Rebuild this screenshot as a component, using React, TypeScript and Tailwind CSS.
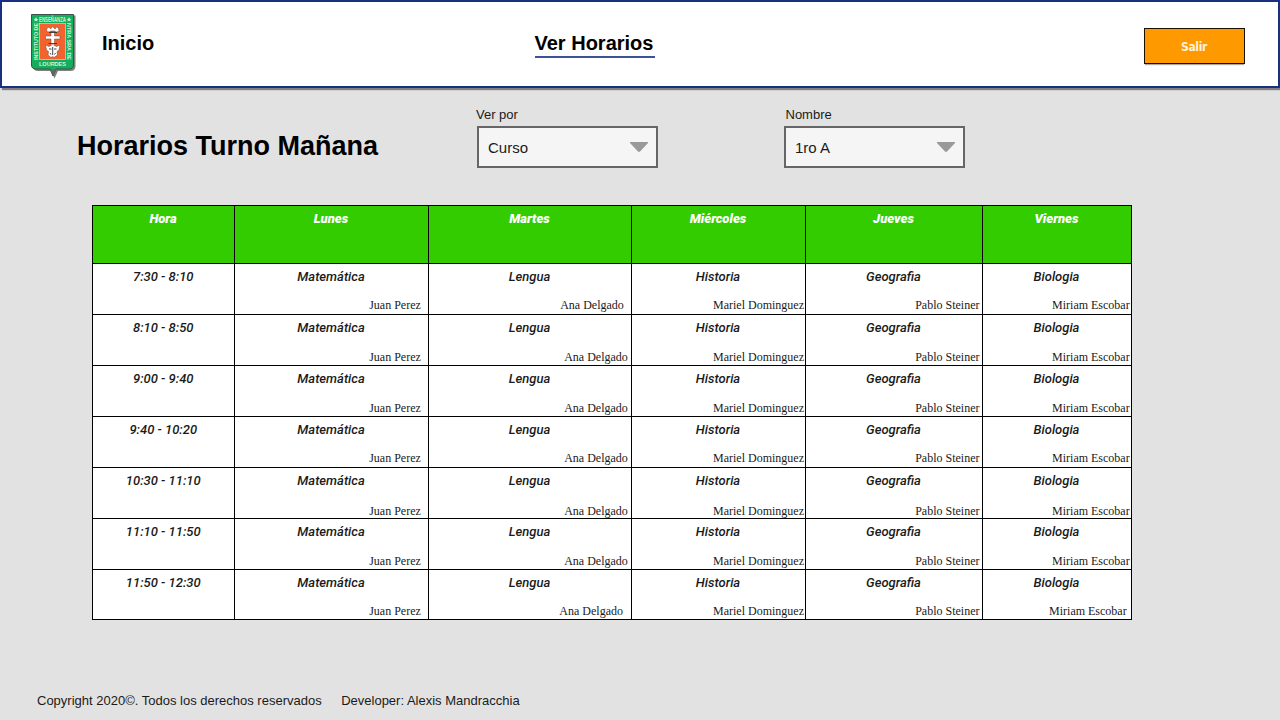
import React from "react";

const days = ["Hora", "Lunes", "Martes", "Miércoles", "Jueves", "Viernes"];

const subjects = [
  { name: "Matemática", teacher: "Juan Perez", pad: "pr-[7.2px]" },
  { name: "Lengua", teacher: "Ana Delgado", pad: "pr-[3.2px]" },
  { name: "Historia", teacher: "Mariel Dominguez", pad: "pr-px" },
  { name: "Geografia", teacher: "Pablo Steiner", pad: "pr-[2.5px]" },
  { name: "Biologia", teacher: "Miriam Escobar", pad: "pr-[1.3px]" },
];

type Row = { time: string; top: string; pads?: Record<string, string> };

const rows: Row[] = [
  { time: "7:30 - 8:10", top: "mt-[12px]", pads: { Lengua: "pr-[7.2px]" } },
  { time: "8:10 - 8:50", top: "mt-[13px]" },
  { time: "9:00 - 9:40", top: "mt-[13px]" },
  { time: "9:40 - 10:20", top: "mt-[12px]" },
  { time: "10:30 - 11:10", top: "mt-[14px]" },
  { time: "11:10 - 11:50", top: "mt-[13px]" },
  { time: "11:50 - 12:30", top: "mt-[12px]", pads: { Lengua: "pr-[8px]", Biologia: "pr-[4.3px]" } },
];

function Shield() {
  return (
    <svg width="50" height="68" viewBox="28 12 50 68" className="block">
      <path d="M33.5 15.5H75.5V66Q75.5 71 70.5 71H58L54.5 78.5L51 71H38Q33.5 71 33.5 67Z" fill="#555" opacity="0.75" />
      <path d="M31.5 14.5H73.5V65Q73.5 69 69 69H56L53 76L50 69H36Q31.5 69 31.5 65Z" fill="#13ad5d" stroke="#3f5148" strokeWidth="1" />
      <path d="M50 69.5H56L53 76Z" fill="#666" />
      <rect x="39.5" y="23.5" width="26" height="36" fill="#f2632f" stroke="#d8efc9" strokeWidth="0.6" />
      <g fill="#d0f3d9" fontFamily="Liberation Sans, sans-serif" fontWeight="700" fontSize="6.4">
        <text x="39" y="21.8" textLength="27" lengthAdjust="spacingAndGlyphs">ENSEÑANZA</text>
        <text x="39" y="66" textLength="27" lengthAdjust="spacing" fontSize="5.6">LOURDES</text>
        <text transform="translate(38.4 60) rotate(-90)" textLength="37" lengthAdjust="spacingAndGlyphs" fontSize="6">INSTITUTO DE</text>
        <text transform="translate(67 23) rotate(90)" textLength="37" lengthAdjust="spacingAndGlyphs" fontSize="6">NTRA SRA DE</text>
      </g>
      <g fill="#c4efd0">
        <path d="M36 17L36.8 18.8L38.4 19L37.2 20L37.6 21.6L36 20.7L34.4 21.6L34.8 20L33.6 19L35.2 18.8Z" />
        <path d="M69 17L69.8 18.8L71.4 19L70.2 20L70.6 21.6L69 20.7L67.4 21.6L67.8 20L66.6 19L68.2 18.8Z" />
      </g>
      <g fill="#fff" stroke="#7b3a2b" strokeWidth="0.5">
        <path d="M47 28L49 27L50.5 29L52.7 26.5L55 29L56.5 27L58.5 28L59 31.5L56 32L55 31L50.5 31L49.5 32L46.5 31.5Z" />
        <path d="M51 32H54.5V36H60V39H54.5V47H51V39H45.5V36H51Z" />
        <path d="M45.5 45L49 46.5L52.7 44.5L56.5 46.5L60 45L59 50L57 51.5L57.5 55L54 57.5L52.7 56.5L51 57.5L48 55L48.5 51.5L46.5 50Z" />
      </g>
      <path d="M49 32.5H57M48.5 43.5H57M49 49H51.5M54 49H56.5M52.7 47V55M50 53L51 54.5M55.5 53L54.5 54.5" stroke="#333" strokeWidth="0.9" fill="none" />
    </svg>
  );
}

function Field({ label, value, shift }: { label: string; value: string; shift: string }) {
  return (
    <div className="w-[181px] text-[#1a1a1a]">
      <div className={`h-[20px] text-[13px] leading-[17px] ${shift}`}>{label}</div>
      <div className="flex h-[42px] items-center justify-between border-2 border-[#666] bg-[#f5f5f5] pr-2 pl-[9px] text-[15px]">
        <span className="mt-[3px]">{value}</span>
        <svg width="18" height="10" viewBox="0 0 18 10" className="mb-px">
          <path d="M0 0H18V1L9.8 9.8H8.2L0 1Z" fill="#999" />
        </svg>
      </div>
    </div>
  );
}

export default function App() {
  return (
    <div className="flex h-[720px] w-[1280px] flex-col overflow-hidden bg-[#e2e2e2] font-['Liberation_Sans',Arial,sans-serif] text-black">
      <header className="flex h-[88px] shrink-0 items-start border-2 border-[#193180] bg-white shadow-[2px_2px_1px_#808080]">
        <div className="ml-[26px] mt-[10px] w-[50px]">
          <Shield />
        </div>
        <a className="ml-[24px] mt-[29px] w-[432.5px] text-[20px] leading-6 font-bold">Inicio</a>
        <a className="mt-[29px] h-[27px] w-[120px] border-b-2 border-[#3c5196] text-[20px] leading-6 font-bold whitespace-nowrap">Ver Horarios</a>
        <button className="mr-[33px] mt-[26px] ml-auto h-[36px] w-[101px] border border-[#1a1000] bg-[#ff9900] pt-px pr-px font-['DejaVu_Sans_Condensed','DejaVu_Sans',sans-serif] text-[12px] font-bold tracking-[-0.4px] text-[#fff4df] shadow-[0_2px_1px_-1px_#aaa]">Salir</button>
      </header>

      <section className="flex h-[117px] shrink-0 items-start pl-[77px]">
        <h1 className="mt-[42px] w-[400px] text-[27px] leading-8 font-bold">Horarios Turno Mañana</h1>
        <div className="mt-[18px] flex gap-[126px]">
          <Field label="Ver por" value="Curso" shift="-ml-px" />
          <Field label="Nombre" value="1ro A" shift="ml-[1.5px]" />
        </div>
      </section>

      <main className="ml-[92px] grid w-[1040px] shrink-0 grid-cols-[142px_194px_203px_174px_177px_149px] grid-rows-[58px_51px_51px_51px_51px_51px_51px_50px] border-r border-b border-black bg-white font-['Roboto',sans-serif] text-[13px] leading-4 italic">
        {days.map((d) => (
          <div key={d} className="border-t border-l border-black bg-[#33cc00] pt-[5px] pr-px text-center font-black text-white">{d}</div>
        ))}
        {rows.map((r) => (
          <React.Fragment key={r.time}>
            <div className="border-t border-l border-black pt-[5px] pr-[0.5px] text-center font-medium text-[#1a1a1a]">{r.time}</div>
            {subjects.map((s) => (
              <div key={s.name} className="border-t border-l border-black pt-[5px] text-center font-medium text-[#1a1a1a]">
                <div className="pr-px">{s.name}</div>
                <div className={`text-right font-['Liberation_Serif',serif] text-[12px] font-normal not-italic whitespace-nowrap ${r.top} ${r.pads?.[s.name] ?? s.pad}`}>{s.teacher}</div>
              </div>
            ))}
          </React.Fragment>
        ))}
      </main>

      <footer className="mt-[73px] flex gap-[19.5px] pl-[37px] text-[13px] leading-4 text-[#1a1a1a]">
        <span>Copyright 2020©. Todos los derechos reservados</span>
        <span>Developer: Alexis Mandracchia</span>
      </footer>
    </div>
  );
}
